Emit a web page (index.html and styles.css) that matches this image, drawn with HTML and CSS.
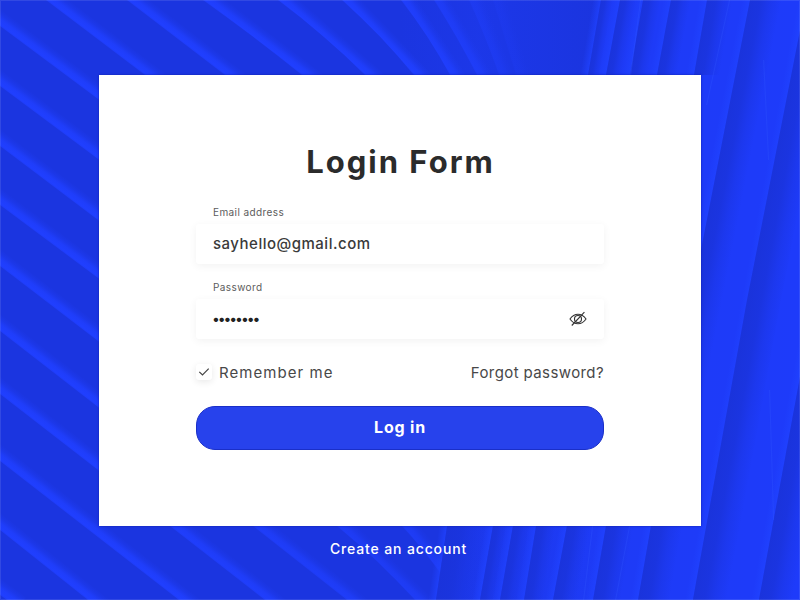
FILE: index.html
```html
<!DOCTYPE html>
<html lang="en">
<head>
<meta charset="utf-8">
<title>Login Form</title>
<link rel="stylesheet" href="styles.css">
</head>
<body>
<svg class="backdrop" viewBox="0 0 800 600" aria-hidden="true">
  <defs id="defs">
    <linearGradient id="rightBase" x1="0" x2="1"><stop offset="0" stop-color="#1c38ea"/><stop offset=".45" stop-color="#1e3bf6"/><stop offset="1" stop-color="#1e3bfa"/></linearGradient>
    <linearGradient id="haze" gradientUnits="userSpaceOnUse" x1="400" y1="0" x2="600" y2="0"><stop offset="0" stop-color="#1e3af0" stop-opacity="0"/><stop offset=".4" stop-color="#1e3af0" stop-opacity=".5"/><stop offset="1" stop-color="#1a34de" stop-opacity=".6"/></linearGradient>
  </defs>
  <rect width="800" height="600" fill="#1b35e0"/>
  <rect x="400" width="210" height="80" fill="url(#haze)"/>
  <g id="left"></g>
  <path d="M601 0L588 74L447 526L436 600H800V0Z" fill="url(#rightBase)"/>
  <g id="right"></g>
</svg>
<main class="page">
  <form class="card">
    <h1 class="title">Login Form</h1>
    <label class="label" for="email">Email address</label>
    <div class="field"><input class="input" id="email" type="text" value="sayhello@gmail.com"></div>
    <label class="label label-password" for="password">Password</label>
    <div class="field">
      <span class="dots" id="password">••••••••</span>
      <svg class="eye" viewBox="0 0 18 16" aria-hidden="true"><path d="M1 8C3.1 4.9 5.700 3.200 9 3.200S14.900 4.900 17 8C14.900 11.100 12.300 12.800 9 12.800S3.100 11.100 1 8Z"/><circle cx="9" cy="8" r="3.500"/><path d="M2.800 14.500L15.400 1.200"/></svg>
    </div>
    <div class="options">
      <span class="check"><svg viewBox="0 0 16 16" aria-hidden="true"><path d="M3.300 7.800L6.500 11L12.700 4.700"/></svg></span>
      <span class="remember">Remember me</span>
      <a class="forgot">Forgot password?</a>
    </div>
    <button class="submit" type="button">Log in</button>
  </form>
  <a class="create">Create an account</a>
</main>
<script src="leaves.js"></script>
</body>
</html>
```
FILE: styles.css
```css
* { box-sizing: border-box; }
body {
  margin: 0;
  width: 800px;
  height: 600px;
  overflow: hidden;
  font-family: Inter, "Open Sans", sans-serif;
  background: #1a34df;
}
.backdrop {
  position: absolute;
  inset: 0;
  width: 800px;
  height: 600px;
}
.page {
  position: relative;
  height: 600px;
  padding-top: 75px;
  display: flex;
  flex-direction: column;
  align-items: center;
  box-shadow: inset 0 0 0 1px rgba(255, 255, 255, .1);
}
.card {
  width: 602px;
  height: 451px;
  padding: 66px 97px 0;
  display: flex;
  flex-direction: column;
  background: #fff;
  box-shadow: 0 0 2px #1020a8;
}
.title {
  margin: 0;
  height: 40px;
  line-height: 42px;
  text-align: center;
  white-space: nowrap;
  font-size: 31px;
  font-weight: 700;
  letter-spacing: 2px;
  text-indent: 1px;
  color: #2b2b2b;
}
.label {
  margin: 24px 0 0 17px;
  height: 14px;
  line-height: 14px;
  font-size: 10px;
  letter-spacing: .4px;
  color: #5c5c5c;
}
.label-password { margin-top: 16px; }
.field {
  margin-top: 5px;
  height: 40px;
  padding: 0 17px;
  display: flex;
  align-items: center;
  justify-content: space-between;
  border-radius: 3px;
  background: #fff;
  box-shadow: 0 2px 8px rgba(0, 0, 0, .055);
}
.input {
  width: 300px;
  padding: 0 0 1px;
  border: 0;
  outline: 0;
  background: none;
  font: 500 15px/20px Inter, sans-serif;
  letter-spacing: .5px;
  color: #3a3a3a;
}
.dots {
  margin-left: -1px;
  font-size: 14px;
  padding-bottom: 1px;
  letter-spacing: -2.1px;
  color: #222;
}
.eye {
  width: 18px;
  height: 16px;
  fill: none;
  stroke: #333;
  stroke-width: 1.1;
}
.options {
  margin-top: 22px;
  height: 22px;
  display: flex;
  align-items: center;
  font-size: 15px;
  color: #484848;
}
.check {
  width: 16px;
  height: 16px;
  border-radius: 3px;
  background: #fff;
  box-shadow: 0 2px 7px rgba(0, 0, 0, .09);
}
.check svg {
  display: block;
  fill: none;
  stroke: #444;
  stroke-width: 1.2;
}
.remember { margin-left: 7px; letter-spacing: 1.05px; }
.forgot { margin-left: auto; letter-spacing: .4px; white-space: nowrap; }
.submit {
  margin-top: 23px;
  height: 44px;
  padding: 0 0 2px;
  border: 1px solid #1a2fc8;
  border-radius: 19px;
  background: #2742ec;
  color: #fff;
  font: 700 16px/20px Inter, sans-serif;
  letter-spacing: .8px;
}
.create {
  margin: 13px 3px 0 0;
  line-height: 20px;
  font-size: 14px;
  font-weight: 500;
  letter-spacing: .86px;
  color: #fff;
}
```
FILE: leaves.js
```js
// Each rib is [x1, y1, x2, y2, strength, bend] along its sharp edge.
const leftRibs = [
  [0,26,98,99,1],[0,86,98,159,1],[0,146,98,220,1],[0,205,98,278,1],[0,266,98,341,1],
  [0,331,98,407,1],[0,394,98,470,1],[0,461,179,600,1],[0,530,88,600,1],[0,595,7,600,1],
  [46,0,145,75,1],[127,0,225,75,1],[203,0,302,75,1,1],[278,0,365,75,1,2],
  [342,0,414,75,1,2],[401,0,450,75,.9,2],[434,0,477,75,.7,1],[469,0,499,75,.4,1],[493,0,516,75,.2],
  [170,526,265,600,.9],[253,526,347,600,.8],[337,526,415,600,.7,2],[402,526,441,574,.7,1]
];
// Each rib is [shadow width, x, y, x, y, ...] along its sharp edge.
const rightRibs = [
  [12,601,0,588,75],[16,620,0,606,75],[18,643,0,630,75],[20,671,0,657,75],[26,707,0,694,75],
  [32,750,0,701,250,671,400],[34,806,0,747,300,692,605],[34,838,170,758,605],
  [40,448,520,436,600],[14,494,520,480,600],[17,514,520,500,600],[20,537,520,524,600],
  [24,568,520,553,600],[28,607,520,593,600],[32,652,520,638,600]
];
const ns = "http://www.w3.org/2000/svg";
let count = 0;
function make(parent, tag, attrs) {
  const node = document.createElementNS(ns, tag);
  for (const key in attrs) node.setAttribute(key, attrs[key]);
  parent.append(node);
  return node;
}
function gradient(x, y, dx, dy, color, stops) {
  const id = "rib" + count++;
  const g = make(document.getElementById("defs"), "linearGradient",
    { id, gradientUnits: "userSpaceOnUse", x1: x, y1: y, x2: x + dx, y2: y + dy });
  for (const [offset, opacity] of stops) make(g, "stop", { offset, "stop-color": color, "stop-opacity": opacity });
  return `url(#${id})`;
}
const left = document.getElementById("left"), right = document.getElementById("right");
// Highlights fade up and to the right from the sharp edge.
for (const [x1, y1, x2, y2, strength, bend = 0] of leftRibs) {
  const dx = x2 - x1, dy = y2 - y1, len = Math.hypot(dx, dy);
  const nx = dy / len, ny = -dx / len;
  const p = (t, w) => {
    const b = bend * (1 - (2 * t - 1) ** 2) + w;
    return `${x1 + dx * t + nx * b} ${y1 + dy * t + ny * b}`;
  };
  const ext = Math.max(.2, 14 / len);
  const steps = [-ext, 0, .25, .5, .75, 1, 1 + ext];
  const d = "M" + steps.map(t => p(t, 0)).join("L") + "L" + steps.slice().reverse().map(t => p(t, 14)).join("L") + "Z";
  const stops = [[0, .75], [.12, 1], [.4, .85], [.7, .3], [1, 0]].map(([o, a]) => [o, a * strength]);
  make(left, "path", { d, fill: gradient(x1, y1, nx * 14, ny * 14, "#203fff", stops) });
}
// Shadows fade to the right, with a slim glow just before the edge.
for (const [width, ...pts] of rightRibs) {
  const edge = [];
  for (let i = 0; i < pts.length; i += 2) edge.push([pts[i], pts[i + 1]]);
  const [a, b] = [edge[0], edge[edge.length - 1]];
  const vx = b[0] - a[0], vy = b[1] - a[1], len = Math.hypot(vx, vy);
  const nx = vy / len, ny = -vx / len;
  const band = w => "M" + edge.map(q => q.join(" ")).join("L") + "L" +
    edge.slice().reverse().map(q => (q[0] + w) + " " + q[1]).join("L") + "Z";
  make(right, "path", { d: band(-8), fill: gradient(a[0], a[1], -nx * 8, -ny * 8, "#2042ff", [[0, .8], [1, 0]]) });
  make(right, "path", { d: band(width), fill: gradient(a[0], a[1], nx * width * .97, ny * width * .97, "#1a33da", [[0, .95], [.35, .8], [.65, .35], [1, 0]]) });
}
// Faint veins running along the broad leaves.
for (const [x1, y1, x2, y2] of [[729,0,706,105],[763,60,768,160],[769,390,773,520],[592,526,583,600],[629,526,615,600],[640,0,630,75]]) {
  make(right, "path", { d: `M${x1} ${y1}h1.2L${x2 + 1.2} ${y2}h-1.2Z`, fill: "rgba(50,85,255,.3)" });
}
```
